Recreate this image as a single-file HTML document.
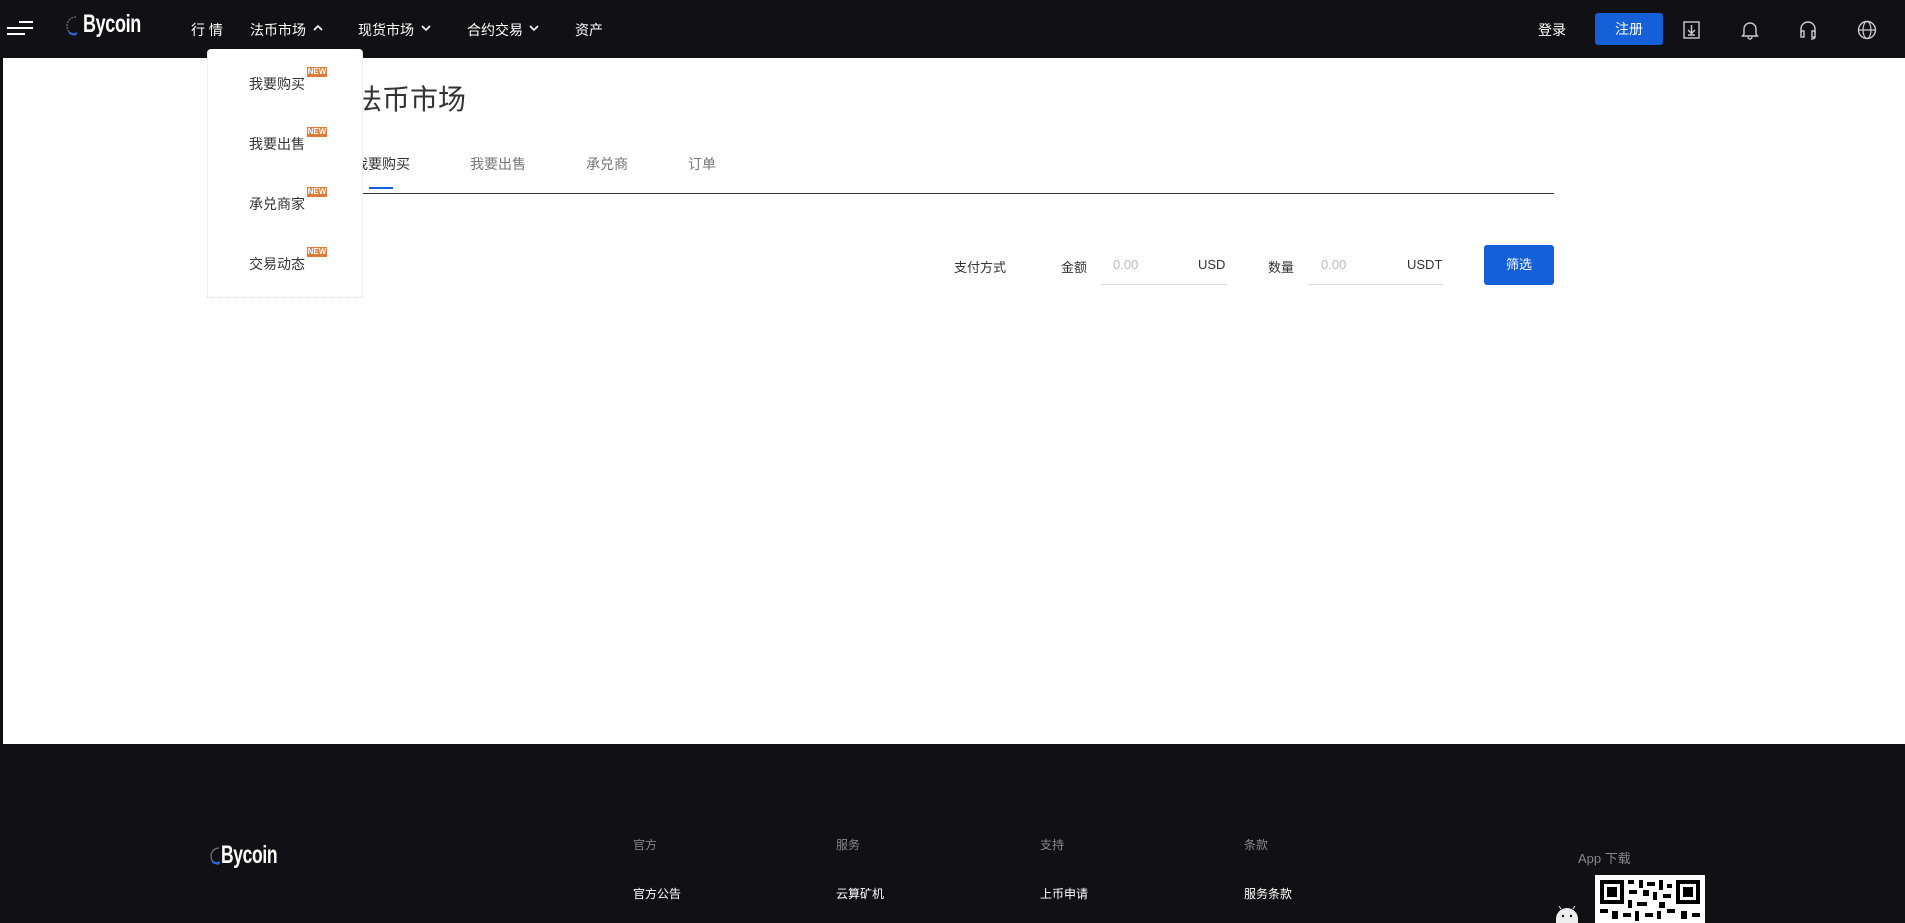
<!DOCTYPE html>
<html><head><meta charset="utf-8"><style>
*{margin:0;padding:0;box-sizing:border-box}
body{width:1905px;height:923px;overflow:hidden;background:#111014;font-family:"Liberation Sans","Noto Sans CJK SC",sans-serif;position:relative}
.a{position:absolute;white-space:nowrap}
.hdr{position:absolute;left:0;top:0;width:1905px;height:58px;background:#111014}
.main{position:absolute;left:3px;top:58px;width:1902px;height:686px;background:#fff}
.nav{color:#fff;font-size:14px;top:20px}
.dd{position:absolute;left:207px;top:49px;width:156px;height:249px;background:#fff;border-radius:4px 4px 0 0;border-left:1px dotted #ddd;border-right:1px dotted #ddd;border-bottom:1px dotted #ddd}
.di{font-size:14px;color:#333}
.new{position:absolute;background:#e07a3a;color:#fff;font-size:8px;font-weight:bold;line-height:10px;text-align:center;width:20px;height:10px}
.tab{font-size:14px;color:#777;top:154px}
.ft{font-size:12px}
.chev{position:absolute;top:24px}
</style></head><body>
<div class="hdr"></div>
<div class="main"></div>
<div class="a" style="left:19px;top:21px;width:14px;height:2px;background:#fff"></div>
<div class="a" style="left:7px;top:27px;width:26px;height:2px;background:#fff"></div>
<div class="a" style="left:7px;top:33px;width:18px;height:2px;background:#fff"></div>
<svg class="a" style="left:66px;top:15px" width="14" height="22"><path d="M10 2 A9 9 0 1 0 10 20" stroke="#777" stroke-width="1.2" fill="none" stroke-dasharray="2 1"/><path d="M3 17 Q7 21 11 18" stroke="#2a6be0" stroke-width="2" fill="none"/></svg>
<div class="a" style="left:83px;top:10px;color:#fff;font-size:25px;font-weight:bold;letter-spacing:-0.5px;transform:scaleX(.72);transform-origin:left">Bycoin</div>
<div class="a nav" style="left:191px">行 情</div>
<div class="a nav" style="left:250px">法币市场</div>
<svg class="chev" style="left:313px" width="10" height="8"><path d="M1 6l4-4 4 4" stroke="#fff" stroke-width="1.6" fill="none"/></svg>
<div class="a nav" style="left:358px">现货市场</div>
<svg class="chev" style="left:421px" width="10" height="8"><path d="M1 2l4 4 4-4" stroke="#fff" stroke-width="1.6" fill="none"/></svg>
<div class="a nav" style="left:467px">合约交易</div>
<svg class="chev" style="left:529px" width="10" height="8"><path d="M1 2l4 4 4-4" stroke="#fff" stroke-width="1.6" fill="none"/></svg>
<div class="a nav" style="left:575px">资产</div>
<div class="a" style="left:1538px;top:20px;color:#fff;font-size:14px">登录</div>
<div class="a" style="left:1595px;top:13px;width:68px;height:32px;background:#1560d8;border-radius:3px;color:#fff;font-size:14px;text-align:center;line-height:32px">注册</div>
<svg class="a" style="left:1683px;top:20px" width="18" height="20"><rect x="1" y="2" width="15" height="16" fill="none" stroke="#ccc" stroke-width="1.4"/><path d="M8.5 5v8M5 10l3.5 3.5L12 10M5 15h7" stroke="#ccc" stroke-width="1.4" fill="none"/></svg>
<svg class="a" style="left:1741px;top:20px" width="18" height="20"><path d="M3 14V9a6 6 0 0 1 12 0v5l1.5 2h-15zM7 17a2 2 0 0 0 4 0" stroke="#ccc" stroke-width="1.4" fill="none"/></svg>
<svg class="a" style="left:1799px;top:20px" width="18" height="20"><path d="M2 13V9a7 7 0 0 1 14 0v4" stroke="#ccc" stroke-width="1.4" fill="none"/><rect x="2" y="11" width="3" height="6" fill="none" stroke="#ccc" stroke-width="1.4"/><path d="M13 11h3v6h-3zM16 17q0 2-4 2" stroke="#ccc" stroke-width="1.4" fill="none"/></svg>
<svg class="a" style="left:1857px;top:20px" width="20" height="20"><circle cx="10" cy="10" r="8.5" fill="none" stroke="#ccc" stroke-width="1.4"/><ellipse cx="10" cy="10" rx="4" ry="8.5" fill="none" stroke="#ccc" stroke-width="1.2"/><path d="M1.5 10h17" stroke="#ccc" stroke-width="1.2"/></svg>
<div class="a" style="left:354px;top:78px;font-size:28px;color:#333">法币市场</div>
<div class="a tab" style="left:354px;color:#333">我要购买</div>
<div class="a tab" style="left:470px">我要出售</div>
<div class="a tab" style="left:586px">承兑商</div>
<div class="a tab" style="left:688px">订单</div>
<div class="a" style="left:369px;top:187px;width:24px;height:2px;background:#1560d8"></div>
<div class="a" style="left:344px;top:193px;width:1210px;height:1px;background:#333"></div>
<div class="a" style="left:954px;top:257px;font-size:13px;color:#333">支付方式</div>
<div class="a" style="left:1061px;top:257px;font-size:13px;color:#333">金额</div>
<div class="a" style="left:1101px;top:284px;width:126px;height:1px;background:#ddd"></div>
<div class="a" style="left:1113px;top:257px;font-size:13px;color:#bbb">0.00</div>
<div class="a" style="left:1198px;top:257px;font-size:13px;color:#333">USD</div>
<div class="a" style="left:1268px;top:257px;font-size:13px;color:#333">数量</div>
<div class="a" style="left:1308px;top:284px;width:135px;height:1px;background:#ddd"></div>
<div class="a" style="left:1321px;top:257px;font-size:13px;color:#bbb">0.00</div>
<div class="a" style="left:1407px;top:257px;font-size:13px;color:#333">USDT</div>
<div class="a" style="left:1484px;top:245px;width:70px;height:40px;background:#1560d8;border-radius:3px;color:#fff;font-size:13px;text-align:center;line-height:40px">筛选</div>
<div class="dd"></div>
<div class="a di" style="left:249px;top:74px">我要购买</div><div class="new a" style="left:307px;top:67px">NEW</div>
<div class="a di" style="left:249px;top:134px">我要出售</div><div class="new a" style="left:307px;top:127px">NEW</div>
<div class="a di" style="left:249px;top:194px">承兑商家</div><div class="new a" style="left:307px;top:187px">NEW</div>
<div class="a di" style="left:249px;top:254px">交易动态</div><div class="new a" style="left:307px;top:247px">NEW</div>
<svg class="a" style="left:210px;top:846px" width="12" height="20"><path d="M9 2 A8 8 0 1 0 9 18" stroke="#777" stroke-width="1.2" fill="none"/><path d="M2 15 Q6 19 10 16" stroke="#2a6be0" stroke-width="2" fill="none"/></svg>
<div class="a" style="left:221px;top:841px;color:#fff;font-size:25px;font-weight:bold;letter-spacing:-0.5px;transform:scaleX(.7);transform-origin:left">Bycoin</div>
<div class="a ft" style="left:633px;top:836px;color:#888">官方</div>
<div class="a ft" style="left:836px;top:836px;color:#888">服务</div>
<div class="a ft" style="left:1040px;top:836px;color:#888">支持</div>
<div class="a ft" style="left:1244px;top:836px;color:#888">条款</div>
<div class="a ft" style="left:633px;top:885px;color:#fff">官方公告</div>
<div class="a ft" style="left:836px;top:885px;color:#fff">云算矿机</div>
<div class="a ft" style="left:1040px;top:885px;color:#fff">上币申请</div>
<div class="a ft" style="left:1244px;top:885px;color:#fff">服务条款</div>
<div class="a" style="left:1578px;top:848px;color:#888;font-size:13px">App 下载</div>
<svg class="a" style="left:1595px;top:875px" width="110" height="48"><rect width="110" height="48" fill="#fff"/>
<g fill="#000"><rect x="5" y="5" width="24" height="24"/><rect x="9" y="9" width="16" height="16" fill="#fff"/><rect x="12" y="12" width="10" height="10"/>
<rect x="81" y="5" width="24" height="24"/><rect x="85" y="9" width="16" height="16" fill="#fff"/><rect x="88" y="12" width="10" height="10"/>
<rect x="33" y="5" width="6" height="4"/><rect x="44" y="5" width="4" height="8"/><rect x="52" y="7" width="8" height="4"/><rect x="64" y="5" width="4" height="10"/><rect x="72" y="9" width="5" height="4"/>
<rect x="34" y="15" width="8" height="4"/><rect x="48" y="15" width="6" height="6"/><rect x="58" y="17" width="4" height="8"/><rect x="68" y="19" width="8" height="4"/>
<rect x="33" y="25" width="4" height="8"/><rect x="42" y="27" width="10" height="4"/><rect x="64" y="27" width="6" height="6"/>
<rect x="5" y="34" width="8" height="4"/><rect x="17" y="36" width="6" height="8"/><rect x="28" y="38" width="8" height="4"/><rect x="40" y="36" width="4" height="10"/><rect x="50" y="38" width="8" height="4"/><rect x="62" y="36" width="4" height="8"/><rect x="72" y="34" width="8" height="4"/><rect x="86" y="36" width="6" height="8"/><rect x="97" y="38" width="8" height="4"/></g></svg>
<svg class="a" style="left:1552px;top:906px" width="30" height="17"><path d="M9 3l-2-3M21 3l2-3" stroke="#eee" stroke-width="1"/><path d="M4 17V13a11 11 0 0 1 22 0v4z" fill="#eee"/><circle cx="11" cy="10" r="1.2" fill="#111"/><circle cx="19" cy="10" r="1.2" fill="#111"/></svg>
</body></html>
